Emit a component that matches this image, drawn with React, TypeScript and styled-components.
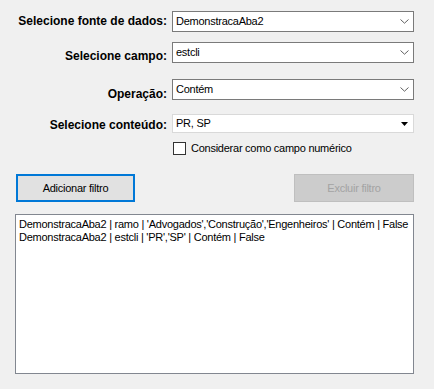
import React from "react"
import styled, { createGlobalStyle } from "styled-components"

const GlobalStyle = createGlobalStyle`
  html, body {
    margin: 0;
    padding: 0;
    background: #f0f0f0;
  }
  body {
    font-family: "Liberation Sans", Arial, sans-serif;
    font-size: 11px;
    letter-spacing: -0.25px;
    color: #000;
  }
`

const Form = styled.div`
  width: 434px;
  height: 389px;
  box-sizing: border-box;
  padding: 11px 20px 0 15px;
  display: flex;
  flex-direction: column;
`

const FieldRow = styled.div<{ $top: number }>`
  display: flex;
  align-items: flex-start;
  margin-top: ${p => p.$top}px;
`

const Label = styled.label<{ $offset: number }>`
  width: 152px;
  flex: none;
  text-align: right;
  font-weight: bold;
  font-size: 12px;
  letter-spacing: 0;
  line-height: 14px;
  padding-top: ${p => p.$offset}px;
  white-space: nowrap;
`

const Combo = styled.div<{ $flat?: boolean }>`
  margin-left: 5px;
  width: 242px;
  height: ${p => (p.$flat ? 19 : 21)}px;
  box-sizing: border-box;
  background: #fff;
  border: 1px solid ${p => (p.$flat ? "#d9d9d9" : "#7a7a7a")};
  display: flex;
  align-items: center;
`

const ComboText = styled.span`
  flex: 1;
  padding-left: 3px;
  line-height: 13px;
  white-space: nowrap;
`

const Arrow = styled.span`
  width: 17px;
  height: 100%;
  display: flex;
  align-items: center;
  justify-content: center;
`

const CheckRow = styled.div`
  display: flex;
  align-items: center;
  margin-top: 9px;
  margin-left: 158px;
  gap: 5px;
  line-height: 13px;
`

const CheckBox = styled.span`
  width: 13px;
  height: 13px;
  box-sizing: border-box;
  border: 1px solid #333;
  background: #fff;
  flex: none;
`

const ButtonRow = styled.div`
  display: flex;
  justify-content: space-between;
  margin-top: 19px;
  margin-left: 1px;
`

const Button = styled.button<{ $disabled?: boolean }>`
  font-family: "Liberation Sans", Arial, sans-serif;
  font-size: 11px;
  letter-spacing: -0.25px;
  height: 28px;
  width: ${p => (p.$disabled ? 120 : 119)}px;
  box-sizing: border-box;
  padding: 0;
  margin: 0;
  background: ${p => (p.$disabled ? "#cccccc" : "#e1e1e1")};
  color: ${p => (p.$disabled ? "#a3a3a3" : "#000")};
  border: ${p => (p.$disabled ? "1px solid #bfbfbf" : "2px solid #0078d7")};
`

const ListBox = styled.div`
  margin-top: 12px;
  width: 399px;
  height: 160px;
  box-sizing: border-box;
  background: #fff;
  border: 1px solid #828790;
  padding: 3px 3px;
`

const ListItem = styled.div`
  line-height: 13px;
  white-space: nowrap;
`

const Chevron = () => (
  <svg width="9" height="5" viewBox="0 0 9 5">
    <path d="M0.5 0.5 L4.5 4.2 L8.5 0.5" fill="none" stroke="#606060" strokeWidth="1" />
  </svg>
)

const Triangle = () => (
  <svg width="7" height="4" viewBox="0 0 7 4">
    <path d="M0 0 H7 L3.5 4 Z" fill="#000" />
  </svg>
)

const fields = [
  { label: "Selecione fonte de dados:", value: "DemonstracaAba2", top: 0, offset: 3 },
  { label: "Selecione campo:", value: "estcli", top: 10, offset: 7 },
  { label: "Operação:", value: "Contém", top: 16, offset: 8 },
]

const items = [
  "DemonstracaAba2 | ramo | 'Advogados','Construção','Engenheiros' | Contém | False",
  "DemonstracaAba2 | estcli | 'PR','SP' | Contém | False",
]

export default function App() {
  return (
    <>
      <GlobalStyle />
      <Form>
        {fields.map(f => (
          <FieldRow key={f.label} $top={f.top}>
            <Label $offset={f.offset}>{f.label}</Label>
            <Combo>
              <ComboText>{f.value}</ComboText>
              <Arrow>
                <Chevron />
              </Arrow>
            </Combo>
          </FieldRow>
        ))}
        <FieldRow $top={13}>
          <Label $offset={4}>Selecione conteúdo:</Label>
          <Combo $flat>
            <ComboText>PR, SP</ComboText>
            <Arrow>
              <Triangle />
            </Arrow>
          </Combo>
        </FieldRow>
        <CheckRow>
          <CheckBox />
          <span>Considerar como campo numérico</span>
        </CheckRow>
        <ButtonRow>
          <Button>Adicionar filtro</Button>
          <Button $disabled>Excluir filtro</Button>
        </ButtonRow>
        <ListBox>
          {items.map(i => (
            <ListItem key={i}>{i}</ListItem>
          ))}
        </ListBox>
      </Form>
    </>
  )
}
